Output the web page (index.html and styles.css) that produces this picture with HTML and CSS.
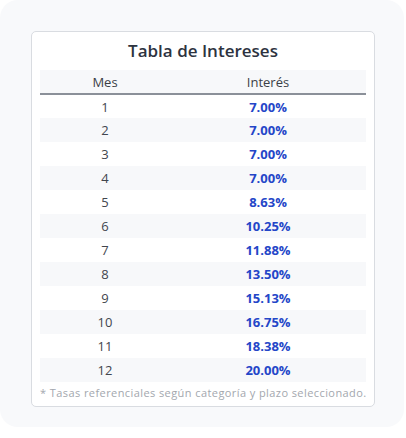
FILE: index.html
```html
<!DOCTYPE html>
<html lang="es">
<head>
<meta charset="utf-8">
<link rel="stylesheet" href="styles.css">
</head>
<body>
<div class="panel">
  <div class="card">
    <h2 class="title">Tabla de Intereses</h2>
    <table class="rates">
      <thead>
        <tr><th class="c-mes">Mes</th><th class="c-int">Interés</th></tr>
      </thead>
      <tbody>
        <tr><td>1</td><td class="pct">7.00%</td></tr>
        <tr><td>2</td><td class="pct">7.00%</td></tr>
        <tr><td>3</td><td class="pct">7.00%</td></tr>
        <tr><td>4</td><td class="pct">7.00%</td></tr>
        <tr><td>5</td><td class="pct">8.63%</td></tr>
        <tr><td>6</td><td class="pct">10.25%</td></tr>
        <tr><td>7</td><td class="pct">11.88%</td></tr>
        <tr><td>8</td><td class="pct">13.50%</td></tr>
        <tr><td>9</td><td class="pct">15.13%</td></tr>
        <tr><td>10</td><td class="pct">16.75%</td></tr>
        <tr><td>11</td><td class="pct">18.38%</td></tr>
        <tr><td>12</td><td class="pct">20.00%</td></tr>
      </tbody>
    </table>
    <p class="note">* Tasas referenciales según categoría y plazo seleccionado.</p>
  </div>
</div>
</body>
</html>
```
FILE: styles.css
```css
* { box-sizing: border-box; }
html, body { margin: 0; padding: 0; background: #ffffff; }
body { font-family: "Open Sans", "Liberation Sans", sans-serif; }
.panel {
  width: 404px;
  height: 427px;
  background: #f8f9fb;
  border-radius: 18px;
  padding: 31px 29px 0 31px;
}
.card {
  width: 344px;
  height: 376px;
  background: #ffffff;
  border: 1px solid #d9dce1;
  border-radius: 5px;
  padding: 6px 8px 0 8px;
}
.title {
  margin: 0;
  text-align: center;
  font-size: 17px;
  font-weight: 600;
  color: #2d3340;
  line-height: 26px;
  height: 32px;
}
.rates {
  width: 326px;
  border-collapse: collapse;
  font-size: 13px;
}
.rates th {
  background: #f7f8fa;
  font-weight: 500;
  color: #3b3f47;
  height: 24px;
  border-bottom: 2px solid #8b9099;
  padding: 0;
}
.c-mes { width: 130px; }
.rates td {
  height: 24px;
  padding: 0;
  text-align: center;
  color: #42464e;
}
.rates tbody tr:nth-child(even) td { background: #f7f8fa; }
.rates td.pct { color: #2446c8; font-weight: 700; }
.note {
  margin: 3px 0 0 0;
  font-size: 11px;
  color: #a3a7ae;
  white-space: nowrap;
  letter-spacing: 0.42px;
}
```
